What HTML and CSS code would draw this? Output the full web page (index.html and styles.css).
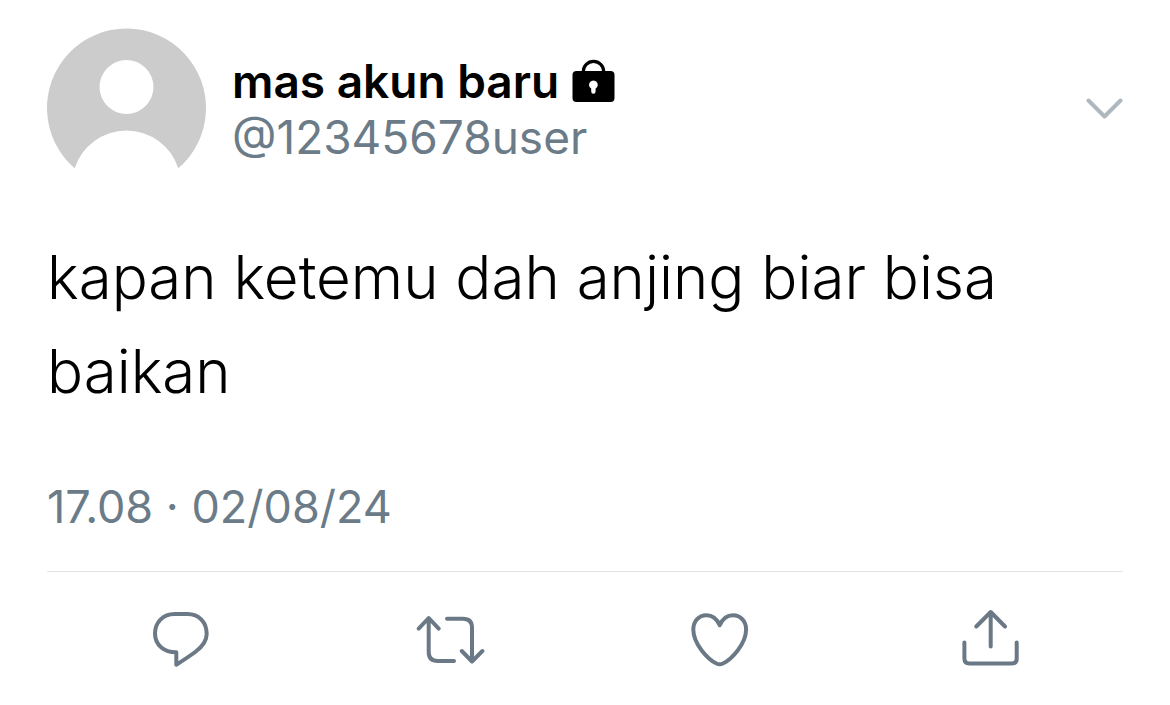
FILE: index.html
```html
<!DOCTYPE html>
<html lang="id">
<head>
<meta charset="utf-8">
<meta name="viewport" content="width=device-width, initial-scale=1">
<title>mas akun baru</title>
<link rel="stylesheet" href="styles.css">
</head>
<body>
<article class="post">
  <header class="post-header">
    <svg class="avatar" viewBox="47 28 160 141" role="img" aria-label="Avatar">
      <path fill="#cccccc" fill-rule="evenodd" d="M74.7 168.3A79.5 79.5 0 1 1 178.3 168.3A54.4 54.4 0 0 0 74.7 168.3ZM126.5 60A27 27 0 1 0 126.5 114A27 27 0 1 0 126.5 60Z"/>
    </svg>
    <div class="identity">
      <h1 class="name">mas akun baru
        <svg class="lock" viewBox="571 58 43 44" role="img" aria-label="Akun privat">
          <path d="M582.3 72V70.5A10.2 10.2 0 0 1 602.7 70.5V72" fill="none" stroke="#000" stroke-width="3.2"/>
          <rect x="571.5" y="70" width="42" height="31" rx="4"/>
          <path fill="#fff" d="M590.2 87.6A4.4 4.4 0 1 1 594.6 87.6V90.5A2.2 2.2 0 0 1 590.2 90.5Z"/>
        </svg>
      </h1>
      <a class="handle" href="#">@12345678user</a>
    </div>
    <button class="icon-button menu" type="button" aria-label="Lainnya">
      <svg class="chevron" viewBox="1085 96 38 25"><path d="M1088.5 100.5L1104.5 116.5L1120.5 100.5"/></svg>
    </button>
  </header>
  <p class="message">kapan ketemu dah anjing biar bisa baikan</p>
  <p class="date"><time datetime="2024-08-02T17:08">17.08 · 02/08/24</time></p>
  <footer class="actions">
    <button class="icon-button" type="button" aria-label="Balas">
      <svg class="action-icon" viewBox="147 608 70 60"><path d="M176.3 652.3V664.7C183 660.5 189 656.6 195.2 652C202 647 206.7 641.5 206.7 634C206.7 622.5 199 614 187.5 614H174.5C163 614 155 622.5 155 633.5C155 645 164 652.3 176.3 652.3Z"/></svg>
    </button>
    <button class="icon-button" type="button" aria-label="Posting ulang">
      <svg class="action-icon" viewBox="416 608 70 60"><path d="M418.7 628.6L428.7 618L438.7 628.6M428.7 618.5V652Q428.7 661 437.7 661H454M447 618.7H463Q472 618.7 472 627.7V661M461.8 651L472 661.5L482.4 651"/></svg>
    </button>
    <button class="icon-button" type="button" aria-label="Suka">
      <svg class="action-icon" viewBox="685 608 70 60"><path d="M719.7 625.3C717 619 712 615.2 706.5 615.2C698.5 615.2 693.3 621.5 693.3 629.5C693.3 644 708 659.5 716.5 663.5Q719.7 664.9 722.9 663.5C731.4 659.5 746.1 644 746.1 629.5C746.1 621.5 740.9 615.2 732.9 615.2C727.4 615.2 722.4 619 719.7 625.3Z"/></svg>
    </button>
    <button class="icon-button" type="button" aria-label="Bagikan">
      <svg class="action-icon" viewBox="954 608 70 60"><path d="M976.3 626.5L990.7 612L1005 626.5M990.7 612.5V646.5M964.4 642.5V658.4Q964.4 663.4 969.4 663.4H1011.7Q1016.7 663.4 1016.7 658.4V642.5"/></svg>
    </button>
  </footer>
</article>
</body>
</html>
```
FILE: styles.css
```css
* {
  box-sizing: border-box;
}

body {
  margin: 0;
  background: #fff;
  color: #000;
  font-family: Inter, "Liberation Sans", sans-serif;
}

.post {
  padding: 28px 47px;
}

.post-header {
  display: flex;
  align-items: flex-start;
  gap: 25px;
}

.avatar {
  flex: none;
  width: 160px;
  height: 141px;
}

.identity {
  flex: 1;
  min-width: 0;
  padding-top: 25px;
}

.name,
.handle,
.date {
  margin: 0;
  font-size: 46px;
  line-height: 56px;
}

.name {
  display: flex;
  align-items: center;
  gap: 13px;
  font-weight: 600;
}

.lock {
  flex: none;
  width: 43px;
  height: 44px;
}

.handle {
  display: block;
  color: #6b7b88;
  text-decoration: none;
}

.icon-button {
  display: flex;
  padding: 0;
  border: 0;
  background: none;
  cursor: pointer;
}

.icon-button svg {
  fill: none;
  stroke: #6b7986;
  stroke-width: 4;
  stroke-linecap: round;
  stroke-linejoin: round;
}

.menu {
  padding-top: 68px;
}

.menu .chevron {
  width: 38px;
  height: 25px;
  stroke: #b0b8bf;
}

.message {
  margin: 61px 0;
  font-size: 60px;
  font-weight: 300;
  line-height: 94px;
}

.date {
  padding-bottom: 36px;
  border-bottom: 1px solid #e1e3e5;
  color: #6b7b88;
  font-size: 45px;
}

.actions {
  display: grid;
  grid-template-columns: repeat(4, 1fr);
  justify-items: center;
  padding-top: 36px;
}

.action-icon {
  width: 70px;
  height: 60px;
}
```
